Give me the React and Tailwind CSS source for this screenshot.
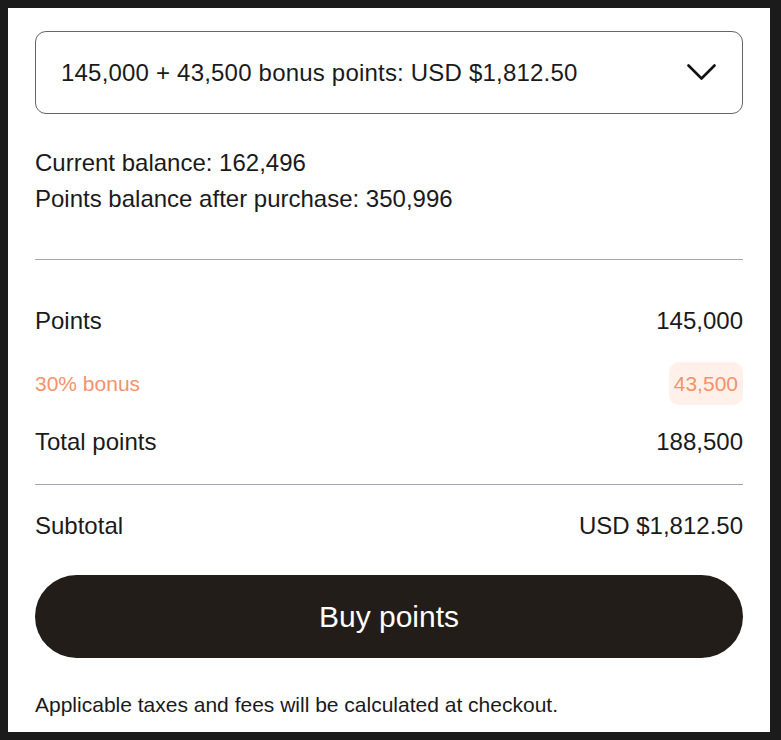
import { useState } from "react";

const font = { fontFamily: '"Liberation Sans", Arial, Helvetica, sans-serif' };

function Row({ label, value }) {
  return (
    <div className="flex items-center justify-between text-[24px] leading-[36px] text-[#1a1a1c]">
      <span>{label}</span>
      <span>{value}</span>
    </div>
  );
}

export default function App() {
  const [option] = useState("145,000 + 43,500 bonus points: USD $1,812.50");

  return (
    <div className="h-screen bg-[#1b1b1b] pt-2 pb-2 pl-2 pr-[11px]" style={font}>
      <div className="h-full overflow-hidden bg-white px-[27px] pt-[23px]">
        <button
          type="button"
          className="flex h-[83px] w-full items-center justify-between rounded-[11px] border border-[#64646b] pl-[25px] pr-[25px] text-left text-[24px] tracking-[0.2px] text-[#1a1a1c]"
        >
          <span>{option}</span>
          <svg width="29" height="17" viewBox="0 0 29 17" fill="none" className="mr-px">
            <polyline
              points="1.5,1.5 14.5,14.5 27.5,1.5"
              stroke="#111"
              strokeWidth="2.6"
              strokeLinecap="round"
              strokeLinejoin="round"
            />
          </svg>
        </button>

        <div className="mt-[31px] text-[24px] leading-[36px] text-[#1a1a1c]">
          <p>Current balance: 162,496</p>
          <p>Points balance after purchase: 350,996</p>
        </div>

        <div className="mt-[42px] border-t border-[#a8a8a8]" />

        <div className="mt-[43px]">
          <Row label="Points" value="145,000" />
        </div>

        <div className="mt-[23px] flex h-[43px] items-center justify-between text-[21px] text-[#f4926a]">
          <span>30% bonus</span>
          <span className="flex h-[43px] items-center rounded-[10px] bg-[#fff1ea] px-[5px]">43,500</span>
        </div>

        <div className="mt-[19px]">
          <Row label="Total points" value="188,500" />
        </div>

        <div className="mt-[24px] border-t border-[#a3a6b0]" />

        <div className="mt-[23px]">
          <Row label="Subtotal" value="USD $1,812.50" />
        </div>

        <button
          type="button"
          className="mt-[31px] flex h-[83px] w-full items-center justify-center rounded-full bg-[#231d1a] text-[30px] text-white"
        >
          Buy points
        </button>

        <p className="mt-[31px] text-[21px] leading-[32px] text-[#1a1a1c]">
          Applicable taxes and fees will be calculated at checkout.
        </p>
      </div>
    </div>
  );
}
